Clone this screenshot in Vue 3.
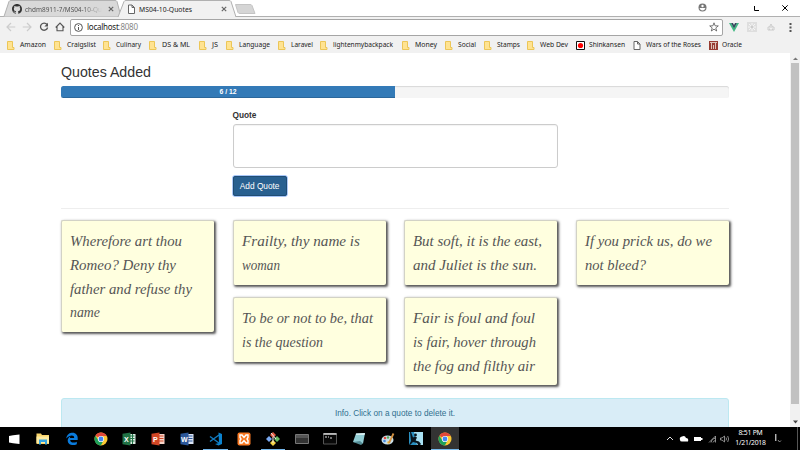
<script setup>
import { h } from 'vue'

// One line of text set to an exact width.
const FitText = (p) =>
  h('svg', { width: p.w, height: p.lh, class: 'fit' }, [
    h('text', { x: 0, y: p.base, textLength: p.w, lengthAdjust: 'spacingAndGlyphs', fill: 'currentColor' }, p.text),
  ])
FitText.props = ['text', 'w', 'lh', 'base']

const bookmarks = [
  { t: 'Amazon', w: 26, span: 47 },
  { t: 'Craigslist', w: 29, span: 49 },
  { t: 'Culinary', w: 25, span: 46 },
  { t: 'DS & ML', w: 28, span: 50 },
  { t: 'JS', w: 6, span: 27 },
  { t: 'Language', w: 31, span: 52 },
  { t: 'Laravel', w: 22, span: 42 },
  { t: 'lightenmybackpack', w: 60, span: 82 },
  { t: 'Money', w: 22, span: 43 },
  { t: 'Social', w: 18, span: 39 },
  { t: 'Stamps', w: 23, span: 43 },
  { t: 'Web Dev', w: 28, span: 48.5 },
  { t: 'Shinkansen', w: 36, span: 57.5, icon: 'flag' },
  { t: 'Wars of the Roses', w: 55, span: 76, icon: 'page' },
  { t: 'Oracle', w: 20, span: 40, icon: 'oracle' },
]

const columns = [
  [[['Wherefore art thou', 112], ['Romeo? Deny thy', 106], ['father and refuse thy', 122], ['name', 30]]],
  [
    [['Frailty, thy name is', 118], ['woman', 38]],
    [['To be or not to be, that', 131], ['is the question', 81]],
  ],
  [
    [['But soft, it is the east,', 129], ['and Juliet is the sun.', 124]],
    [['Fair is foul and foul', 122], ['is fair, hover through', 123], ['the fog and filthy air', 122]],
  ],
  [[['If you prick us, do we', 127], ['not bleed?', 61]]],
]

const current = 6
const max = 12

const apps = ['start', 'files', 'edge', 'chrome', 'excel', 'ppt', 'word', 'code', 'xampp', 'git', 'term', 'cmd', 'note', 'paint', 'kindle', 'chrome']
const running = [7, 9, 15]
</script>

<template>
  <div class="screen">
    <header class="titlebar">
      <svg class="tab-shapes" width="270" height="17">
        <path d="M0 16.5H4L9 1.5Q9.500 .5 11 .5H115Q116.500 .5 117 1.500L121 16.500" fill="#d9d9d9" stroke="#b0b0b0" />
        <path d="M118 17L124 1.500Q124.500 .5 126 .5H229Q230.500 .5 231 1.500L236 17" fill="#f1f1f1" stroke="#b0b0b0" />
        <path d="M235.500 4.500H250Q251.500 4.500 252 5.500L255 13.500H240Q238.500 13.500 238 12.500Z" fill="#d5d5d5" stroke="#c4c4c4" />
      </svg>
      <div class="tab first">
        <svg width="10" height="10" viewBox="0 0 16 16"><path fill="#333" d="M8 0C3.580 0 0 3.580 0 8c0 3.540 2.290 6.530 5.470 7.590.4.070.55-.17.55-.38v-1.490c-2.010.37-2.530-.49-2.690-.94-.09-.23-.48-.94-.82-1.130-.28-.15-.68-.52-.01-.53.63-.01 1.080.58 1.230.82.72 1.210 1.870.87 2.330.66.070-.52.28-.87.510-1.070-1.780-.2-3.640-.89-3.640-3.950 0-.87.310-1.590.82-2.150-.08-.2-.36-1.020.08-2.120 0 0 .67-.21 2.200.82a7.600 7.600 0 0 1 4 0c1.530-1.040 2.200-.82 2.200-.82.44 1.100.16 1.920.08 2.120.510.56.82 1.270.82 2.150 0 3.070-1.870 3.750-3.650 3.950.29.25.54.73.54 1.480v2.200c0 .21.150.46.550.38A8 8 0 0 0 16 8c0-4.420-3.580-8-8-8z" /></svg>
        <FitText text="chdm8911-7/MS04-10-Qu" :w="77" :lh="12" :base="8.700" class="tab-title faded" />
        <svg width="6" height="6"><path d="M.8.8L5.200 5.200M5.200.8L.8 5.200" stroke="#666" stroke-width="1.200" /></svg>
      </div>
      <div class="tab second">
        <svg width="7" height="10"><path d="M.5 1H4L6.500 3.500V9.500H.5ZM4 1V3.500H6.500" fill="#fff" stroke="#666" /></svg>
        <FitText text="MS04-10-Quotes" :w="53" :lh="12" :base="8.700" class="tab-title" />
        <svg class="close" width="6" height="6"><path d="M.8.8L5.200 5.200M5.200.8L.8 5.200" stroke="#666" stroke-width="1.200" /></svg>
      </div>
      <div class="window-buttons">
        <svg class="profile" width="9" height="9"><circle cx="4.500" cy="4.500" r="4" fill="#777" /><circle cx="4.500" cy="3" r="1.200" fill="#fff" /><path d="M1.500 5H7.500Q6.500 7.500 4.500 7.500T1.500 5Z" fill="#fff" /></svg>
        <svg class="max" width="6" height="6"><path d="M.5 0V4.500H5" fill="none" stroke="#000" /></svg>
        <svg width="6" height="6"><path d="M.3.3L5.700 5.700M5.700.3L.3 5.700" stroke="#000" /></svg>
      </div>
    </header>

    <div class="toolbar">
      <div class="nav">
        <svg width="10" height="10"><path d="M9.300 5H1M5 1L1 5L5 9" fill="none" stroke="#ccc" stroke-width="1.200" /></svg>
        <svg width="10" height="10"><path d="M.7 5H9M5 1L9 5L5 9" fill="none" stroke="#ccc" stroke-width="1.200" /></svg>
        <svg width="10" height="10"><path d="M8 2.500A3.600 3.600 0 1 0 8.600 5.500" fill="none" stroke="#555" stroke-width="1.300" /><path d="M9 .8V4.400H5.400Z" fill="#555" /></svg>
        <svg width="10" height="10"><path d="M.7 5.500L5 1L9.300 5.500M2 4.500V8.800H8V4.500" fill="none" stroke="#555" stroke-width="1.100" /></svg>
      </div>
      <div class="address">
        <svg width="9" height="9"><circle cx="4.500" cy="4.500" r="3.900" fill="none" stroke="#555" /><path d="M4.500 4V7M4.500 2V3" stroke="#555" /></svg>
        <span class="url">localhost<i>:8080</i></span>
        <svg class="star" width="10" height="10"><path d="M5 .8L6.100 3.800L9.300 3.900L6.800 5.900L7.700 9L5 7.200L2.300 9L3.200 5.900L.7 3.900L3.900 3.800Z" fill="none" stroke="#555" stroke-width=".8" /></svg>
      </div>
      <div class="extensions">
        <svg width="10" height="9"><path d="M0 0H2L5 5L8 0H10L5 9Z" fill="#41b883" /><path d="M2 0H4L5 2L6 0H8L5 5.500Z" fill="#35495e" /></svg>
        <svg width="10" height="10"><path d="M0 0H10V10H0Z" fill="#dedede" /><path d="M5 1V9M1 5H9M2 2L8 8M8 2L2 8" stroke="#f5f5f5" /><circle cx="5" cy="5" r="1.400" fill="#ccc" /></svg>
        <svg width="8" height="8"><path d="M1 7V4H7V7ZM2.500 4L4 1L5.500 4M2.500 7V5.500M5.500 7V5.500" fill="none" stroke="#ccc" /></svg>
        <svg width="3" height="9"><path d="M.5 0H2.500V2H.5ZM.5 3.500H2.500V5.500H.5ZM.5 7H2.500V9H.5Z" fill="#555" /></svg>
      </div>
    </div>

    <nav class="bookmarks">
      <div v-for="b in bookmarks" :key="b.t" class="bookmark" :style="{ width: b.span + 'px' }">
        <svg width="9" height="9">
          <template v-if="b.icon === 'flag'"><path d="M.5.5H8.500V8.500H.5Z" fill="#fff" stroke="#111" /><circle cx="4.500" cy="4.500" r="2.600" fill="#f00" /></template>
          <path v-else-if="b.icon === 'page'" d="M1 .5H4.500L7 3V8.500H1ZM4.500 .5V3H7" fill="#fff" stroke="#666" />
          <template v-else-if="b.icon === 'oracle'"><path d="M0 0H9V9H0Z" fill="#973c32" /><path d="M1 1.500H8M2.500 2V8M4.500 4V8M6.500 2V8" stroke="#dcc2b8" /></template>
          <path v-else d="M.5 .5H5.500V6.500H7V8.500H.5Z" fill="#ffe391" stroke="#ecc657" />
        </svg>
        <FitText :text="b.t" :w="b.w" :lh="10" :base="7.200" class="bm-text" />
      </div>
    </nav>

    <div class="viewport">
      <main class="container">
        <h3>Quotes Added</h3>
        <div class="progress"><div class="bar" :style="{ width: (current / max) * 100 + '%' }">{{ current }} / {{ max }}</div></div>
        <form class="form" @submit.prevent>
          <label>Quote</label>
          <div class="textarea"></div>
          <button type="button">Add Quote</button>
        </form>
        <hr />
        <section class="quotes">
          <div v-for="(col, i) in columns" :key="i" class="column">
            <article v-for="(q, j) in col" :key="j" class="card">
              <FitText v-for="l in q" :key="l[0]" :text="l[0]" :w="l[1]" :lh="23.75" :base="17" class="quote-line" />
            </article>
          </div>
        </section>
        <div class="alert">Info. Click on a quote to delete it.</div>
      </main>
      <aside class="scrollbar">
        <svg width="5" height="4"><path d="M0 3H5L2.500 .5Z" fill="#777" /></svg>
        <div class="thumb"></div>
        <svg width="5" height="4"><path d="M0 .5H5L2.500 3.500Z" fill="#444" /></svg>
      </aside>
    </div>

    <footer class="taskbar">
      <div v-for="(a, i) in apps" :key="i" class="app" :class="{ running: running.includes(i), active: i === 15 }">
        <svg width="14" height="14">
          <path v-if="a === 'start'" d="M1 4L5 3.300L11.500 2.500V12L5 11.300L1 10.500Z" fill="#fff" />
          <template v-else-if="a === 'files'"><path d="M.5 1.500H5L6 3H13V12H.5Z" fill="#f9d56c" /><path d="M.5 4.500H13V11H.5Z" fill="#ffeba0" /><path d="M3 7.500H11V12.500H9V10H5V12.500H3Z" fill="#36a5e0" /></template>
          <path v-else-if="a === 'edge'" d="M1.200 6.500C2 2 5 .8 7.500 .8C11 .8 12.700 3.500 12.700 6V8H5.200C5.300 10.800 8.800 11.300 11.800 9.700V12.200C8 14 2.700 13 2.700 8.500C2.700 6.500 4 5 5.500 4.200C5 5 5 5.800 5 6H9.200C9.200 2.500 4.500 3 1.200 6.500Z" fill="#0a7bdc" />
          <template v-else-if="a === 'chrome'">
            <circle cx="7" cy="7" r="6.500" fill="#fcc934" />
            <path d="M7 7L1.400 3.700A6.500 6.500 0 0 1 12.700 4H7Z" fill="#e1483b" />
            <path d="M1.400 3.700A6.500 6.500 0 0 0 6.800 13.500L9.600 8.500L7 7L4.400 8.500Z" fill="#1ea15b" />
            <circle cx="7" cy="7" r="3.100" fill="#fff" /><circle cx="7" cy="7" r="2.400" fill="#4285f4" />
          </template>
          <template v-else-if="['excel', 'ppt', 'word'].includes(a)">
            <path d="M6 2H13.500V12H6Z" :fill="{ excel: '#dcebe2', ppt: '#f6d5ca', word: '#dce5f5' }[a]" />
            <path d="M8 4H12.500M8 6.500H12.500M8 9H12.500" :stroke="{ excel: '#207245', ppt: '#d24625', word: '#2b579a' }[a]" />
            <path v-if="a === 'excel'" d="M10.500 2V12" stroke="#207245" />
            <path d="M.5 1.800L8.500 .5V13.500L.5 12.200Z" :fill="{ excel: '#207245', ppt: '#d24625', word: '#2b579a' }[a]" />
            <text x="4.400" y="9.700" text-anchor="middle" class="office">{{ { excel: 'X', ppt: 'P', word: 'W' }[a] }}</text>
          </template>
          <template v-else-if="a === 'code'"><path d="M1 4.500L10 11M1 9.500L10 3" stroke="#1279be" stroke-width="1.500" /><path d="M9.500 .5L13 2V12L9.500 13.500L6 12L10 11Z" fill="#0b83cf" /></template>
          <template v-else-if="a === 'xampp'"><rect x=".5" y=".5" width="13" height="13" rx="2" fill="#f97922" /><path d="M3 3H5L7 5.500L9 3H11V5.500L10 7L11 8.500V11H9L7 8.500L5 11H3V8.500L4 7L3 5.500Z" fill="none" stroke="#fff" stroke-width="1.400" /></template>
          <template v-else-if="a === 'git'"><path d="M7 0L10 3L7 6L4 3Z" fill="#e45b42" /><path d="M3 4L6 7L3 10L0 7Z" fill="#7aa9f2" /><path d="M11 4L14 7L11 10L8 7Z" fill="#66bd62" /><path d="M7 8L10 11L7 14L4 11Z" fill="#f4d144" /><path d="M5 1L10 7M7 5V11" stroke="#eee" /></template>
          <template v-else-if="a === 'term'"><path d="M.5 2.500H13.500V11.500H.5Z" fill="#333" stroke="#777" /><path d="M1 3H13V6H1Z" fill="#555" /></template>
          <template v-else-if="a === 'cmd'"><path d="M.5 1.500H13.500V12H.5Z" fill="#080808" stroke="#555" /><path d="M.5 2H13.500" stroke="#ddd" stroke-width="1.500" /><path d="M2 5H4M5 5H6M7 6H9" stroke="#ddd" /></template>
          <template v-else-if="a === 'note'"><path d="M4 1.500L13 1L11 11.500L1 10Z" fill="#91ccd3" /><path d="M4 1.500L13 1L12.500 3L4 3Z" fill="#d6edf0" /><path d="M1 10L8 9L11 11.500L9 13Z" fill="#538b94" /></template>
          <template v-else-if="a === 'paint'"><ellipse cx="6.500" cy="8" rx="6" ry="4.500" fill="#c8dfea" /><circle cx="4" cy="6" r="1.300" fill="#e4483c" /><circle cx="3.500" cy="9" r="1.300" fill="#488ade" /><circle cx="7" cy="5.500" r="1.200" fill="#53aa57" /><circle cx="7.500" cy="10.500" r="1.200" fill="#f1be40" /><path d="M8 11L12.500 1.500" stroke="#d49343" stroke-width="1.800" /></template>
          <template v-else><path d="M0 0H14V13H0Z" fill="#2a8fc0" /><path d="M5 0H14V13H8Z" fill="#a8e0f2" /><circle cx="6.500" cy="3" r="1.400" fill="#07131c" /><path d="M1 0H2L4 5.500L6 4.500L8 5.500L6.500 8.500L10 9.500L12 12L11 13H9L8 11L4 10L1 13H0L2 9Z" fill="#07131c" /></template>
        </svg>
      </div>
      <div class="tray">
        <svg width="8" height="5"><path d="M1 4L4 1L7 4" fill="none" stroke="#ddd" /></svg>
        <svg width="10" height="8"><path d="M1 5Q0 2 3 1.500Q6 0 7 3Q10 3 9 6.500H3Q1 6.500 1 5Z" fill="#fff" /></svg>
        <svg width="10" height="6"><path d="M1 1H8V2H9.500V4H8V5H1Z" fill="#fff" /></svg>
        <svg width="8" height="8"><path d="M1 7.500L7.500 1V7.500M3 7.500A5 5 0 0 1 7.500 3M5 7.500A3 3 0 0 1 7.500 5.500" fill="none" stroke="#aaa" stroke-width=".8" /></svg>
        <svg width="10" height="8"><path d="M.5 3H2L4.500 1V7L2 5H.5ZM6 2.500Q7 4 6 5.500M7.700 1Q9.500 4 7.700 7" fill="none" stroke="#aaa" stroke-width=".8" /></svg>
      </div>
      <div class="clock"><span>8:51 PM</span><span>1/21/2018</span></div>
      <svg class="notice" width="8" height="11"><path d="M.8 1V8" stroke="#fff" /><path d="M3 7L4.500 9L6 7.500" fill="none" stroke="#aaa" stroke-width=".8" /></svg>
      <div class="peek"></div>
    </footer>
  </div>
</template>

<style>
body { margin: 0; overflow: hidden; }
</style>

<style scoped>
* { box-sizing: border-box; }
svg { display: block; flex: none; }
.screen { width: 800px; height: 450px; display: flex; flex-direction: column; overflow: hidden; background: #fff; font-family: "Liberation Sans", Arial, sans-serif; }
.fit { overflow: visible; }
.titlebar { height: 17px; flex: none; display: flex; position: relative; border-bottom: 1px solid #b0b0b0; background: #fff; }
.tab-shapes { position: absolute; left: 0; top: 0; }
.tab { position: relative; height: 17px; display: flex; align-items: center; }
.first { width: 128px; padding-left: 12px; gap: 3px; }
.second { width: 105px; }
.tab-title { margin-left: 4px; font: 7px "Noto Sans", sans-serif; color: #222; }
.first .tab-title { margin-left: 0; margin-right: 3px; }
.faded { mask-image: linear-gradient(to right, #000 75%, transparent); color: #555; }
.close { margin-left: auto; margin-right: 6px; }
.window-buttons { margin-left: auto; display: flex; align-items: center; padding: 0 12px 1px 0; }
.profile { margin-right: 1px; }
.window-buttons .max { margin: 2px 22px 0 46px; }
.toolbar { height: 20px; flex: none; display: flex; align-items: center; background: #f1f1f1; padding-left: 6px; }
.nav { display: flex; gap: 6.300px; width: 64px; }
.address { width: 653px; height: 17px; display: flex; align-items: center; border: 1px solid #a5a5a5; border-radius: 2px; background: #fff; padding: 0 3px; }
.url { margin-left: 4px; font: 8px/12px "Noto Sans", sans-serif; letter-spacing: -.25px; color: #222; }
.url i { font-style: normal; color: #888; }
.star { margin-left: auto; }
.extensions { display: flex; align-items: center; margin-left: 6px; gap: 8px; }
.extensions svg:nth-child(3) { margin: 0 6px 0 2px; }
.bookmarks { height: 16px; flex: none; display: flex; align-items: center; padding-left: 7px; background: #f1f1f1; }
.bookmark { flex: none; display: flex; align-items: center; gap: 4px; }
.bm-text { font: 7px "Noto Sans", sans-serif; color: #222; }
.viewport { flex: 1; min-height: 0; display: flex; overflow: hidden; }
.container { width: 790px; padding: 0 61px; overflow: hidden; }
h3 { margin: 12px 0 6px; font-size: 14.200px; line-height: 15px; font-weight: 400; color: #333; }
.progress { height: 12px; background: #f5f5f5; border-radius: 2.500px; overflow: hidden; box-shadow: inset 0 1px 1px rgba(0,0,0,.12); }
.bar { height: 12px; background: #337ab7; box-shadow: inset 0 -1px 0 rgba(0,0,0,.15); color: #fff; font-size: 6.800px; line-height: 11.500px; font-weight: 700; text-align: center; }
.form { padding: 12px 171px 0 171.500px; display: flex; flex-direction: column; align-items: flex-start; }
label { font-size: 8.300px; line-height: 11px; font-weight: 700; color: #333; margin-bottom: 3px; }
.textarea { width: 325.300px; height: 44px; border: 1px solid #ccc; border-radius: 3px; box-shadow: inset 0 1px 1px rgba(0,0,0,.05); }
button { margin-top: 8px; width: 54.300px; height: 20px; padding: 0; border: 1px solid #204d74; border-radius: 2px; background: #286090; box-shadow: 0 0 0 .7px #8bb4f5; color: #fff; font: 8.300px "Liberation Sans", sans-serif; }
hr { margin: 12px 0 11px; border: 0; border-top: 1px solid #eee; }
.quotes { display: grid; grid-template-columns: repeat(4, 153px); column-gap: 18.700px; height: 178px; align-items: start; }
.column { display: flex; flex-direction: column; gap: 12.500px; }
.card { padding: 8px; border: 1px solid #d2d2c6; border-right: 0; border-bottom: 0; border-radius: 2px; background: #ffffdf; box-shadow: 1.500px 1.500px 2.500px #555; }
.quote-line { font: italic 15.500px "Liberation Serif", serif; color: #555; }
.alert { height: 50px; border: 1px solid #bce8f1; border-radius: 3px; background: #d9edf7; color: #31708f; font-size: 8.250px; line-height: 30px; text-align: center; }
.scrollbar { width: 10px; display: flex; flex-direction: column; align-items: center; padding: 4px 0; background: #f1f1f1; }
.thumb { width: 8px; height: 341px; margin: 2px 0 16px; background: #c1c1c1; flex: none; }
.taskbar { height: 23px; flex: none; display: flex; background: #000; padding-left: .4px; }
.app { width: 28.700px; height: 23px; display: flex; align-items: center; justify-content: center; flex: none; position: relative; }
.active { background: #333; }
.running::after { content: ""; position: absolute; bottom: 0; left: 2px; right: 2px; height: 1px; background: #76b9ed; }
.active::after { left: 0; right: 0; }
.office { font: 700 7px "Liberation Sans", sans-serif; fill: #fff; }
.tray { margin-left: auto; display: flex; align-items: center; gap: 4.500px; }
.clock { width: 41px; display: flex; flex-direction: column; align-items: center; margin: 1px 4px 0 0; color: #fff; font: 6.800px/10.300px "Noto Sans", sans-serif; letter-spacing: -.2px; }
.notice { margin: 6px 14px 0 0; }
.peek { width: 1px; margin-right: 2px; background: #555; }
</style>
